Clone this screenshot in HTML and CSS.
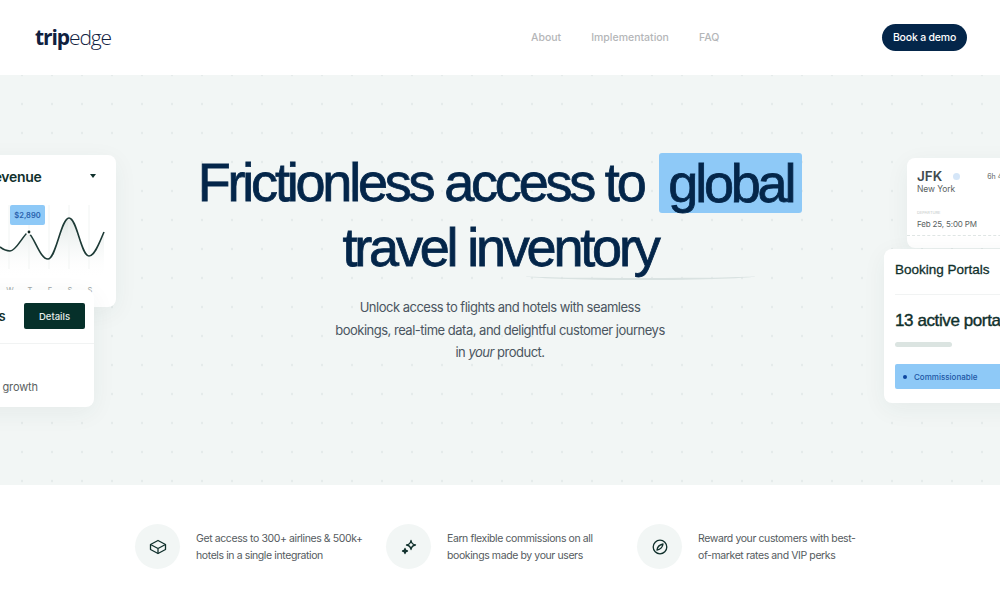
FILE: index.html
```html
<!DOCTYPE html>
<html lang="en">
<head>
    <meta charset="UTF-8">
    <title>TripEdge</title>
    <link rel="stylesheet" href="styles.css">
</head>
<body>
    <header class="topbar">
        <a class="logo"><b>trip</b><span>edge</span></a>
        <nav class="nav">
            <a>About</a>
            <a>Implementation</a>
            <a>FAQ</a>
        </nav>
        <a class="demo-btn">Book a demo</a>
    </header>

    <section class="hero">
        <!-- left cards -->
        <div class="card revenue">
            <div class="revenue-head"><span>Revenue</span><i class="caret"></i></div>
            <svg class="chart" width="116" height="90" viewBox="0 0 116 90">
                <defs>
                    <linearGradient id="fade" x1="0" y1="0" x2="0" y2="1">
                        <stop offset="0" stop-color="#dfe6e4"></stop>
                        <stop offset="1" stop-color="#ffffff" stop-opacity="0"></stop>
                    </linearGradient>
                </defs>
                <path d="M0 56C4 59 7 60 10 60C16 60 22 46 28 41C35 47 40 68 48 68C56 68 61 27 69 27C77 27 81 65 89 65C95 65 100 50 104 41V88H0Z" fill="url(#fade)"></path>
                <path d="M9 14V78M29 14V78M49 14V78M69 14V78M89 14V78" stroke="#f1f4f3" fill="none"></path>
                <path d="M0 56C4 59 7 60 10 60C16 60 22 46 28 41C35 47 40 68 48 68C56 68 61 27 69 27C77 27 81 65 89 65C95 65 100 50 104 41" stroke="#1d3a36" stroke-width="1.6" fill="none"></path>
                <circle cx="29" cy="41" r="3" fill="#fff"></circle>
                <circle cx="29" cy="41" r="1.400" fill="#10251f"></circle>
            </svg>
            <div class="tip">$2,890</div>
            <div class="days"><span>W</span><span>T</span><span>F</span><span>S</span><span>S</span></div>
        </div>
        <div class="card partners">
            <div class="partners-head"><span class="partners-title">Partners</span><a class="details">Details</a></div>
            <p class="growth">Strong growth</p>
        </div>

        <!-- right cards -->
        <div class="card flight">
            <div class="flight-top"><b>JFK</b><i class="plane"></i><small>6h 40m</small></div>
            <div class="city">New York</div>
            <div class="dep-label">DEPARTURE</div>
            <div class="dep-date">Feb 25, 5:00 PM</div>
        </div>
        <div class="card portals">
            <div class="portals-title">Booking Portals</div>
            <div class="portals-count">13 active portals</div>
            <div class="portals-bar"></div>
            <div class="portals-tag"><i></i>Commissionable</div>
        </div>

        <h1 class="headline">Frictionless access to <span class="mark">global</span><br><span class="underlined">travel inventory</span></h1>
        <p class="lead">Unlock access to flights and hotels with seamless<br>bookings, real-time data, and delightful customer journeys<br>in <em>your</em> product.</p>
    </section>

    <section class="features">
        <div class="feature">
            <div class="feature-icon">
                <svg width="18" height="18" viewBox="0 0 18 18" fill="none" stroke="#10302c" stroke-width="1.300" stroke-linejoin="round"><path d="M9 2.500 16.500 6.500V11.500L9 15.500 1.500 11.500V6.500Z"></path><path d="M1.500 6.500 9 10.500 16.500 6.500M9 10.500V15.500"></path></svg>
            </div>
            <p>Get access to 300+ airlines &amp; 500k+<br>hotels in a single integration</p>
        </div>
        <div class="feature">
            <div class="feature-icon">
                <svg width="18" height="18" viewBox="0 0 18 18" fill="none" stroke="#10302c" stroke-width="1.300" stroke-linejoin="round"><path d="M11 2.500C11.500 5.500 12.500 6.500 15.500 7C12.500 7.500 11.500 8.500 11 11.500C10.500 8.500 9.500 7.500 6.500 7C9.500 6.500 10.500 5.500 11 2.500Z"></path><path d="M5 10.500C5.200 12 6 12.800 7.500 13C6 13.200 5.200 14 5 15.500C4.800 14 4 13.200 2.500 13C4 12.800 4.800 12 5 10.500Z" fill="#10302c"></path></svg>
            </div>
            <p>Earn flexible commissions on all<br>bookings made by your users</p>
        </div>
        <div class="feature">
            <div class="feature-icon">
                <svg width="18" height="18" viewBox="0 0 18 18" fill="none" stroke="#10302c" stroke-width="1.300" stroke-linejoin="round"><circle cx="9" cy="9" r="6.800"></circle><path d="M12 6C11.700 8.800 10.500 11 6 12C6.300 9 7.500 7 12 6Z"></path></svg>
            </div>
            <p>Reward your customers with best-<br>of-market rates and VIP perks</p>
        </div>
    </section>
</body>
</html>
```

FILE: styles.css
```css
* { box-sizing: border-box; }
body { margin: 0; height: 600px; overflow: hidden; background: #fff; font-family: Inter, "Liberation Sans", sans-serif; color: #0a2540; }
p { margin: 0; }

.topbar { height: 75px; display: flex; align-items: center; padding: 0 33px 0 35px; }
.logo { width: 496px; font-size: 21px; letter-spacing: -1.100px; color: #10213f; font-family: "Open Sans", sans-serif; margin-top: -2px; }
.logo b { font-weight: 700; }
.logo span { font-weight: 300; }
.nav { display: flex; gap: 30px; flex: 1; font-size: 10.500px; font-weight: 500; color: #b4b6b8; }
.demo-btn { background: #04264a; color: #fff; border-radius: 14px; height: 27px; width: 85px; display: flex; align-items: center; justify-content: center; font-size: 10.500px; font-weight: 500; letter-spacing: -0.200px; }

.hero { position: relative; height: 410px; overflow: hidden; background-color: #f2f6f5; background-image: radial-gradient(circle, #dde4e3 0.8px, transparent 1.200px); background-size: 30px 29px; background-position: 7px 14.500px; text-align: center; padding-top: 75px; }
.headline { margin: 0; font-family: "Liberation Sans", sans-serif; font-size: 54px; font-weight: 400; line-height: 65px; letter-spacing: -3.200px; color: #04264a; -webkit-text-stroke: 0.800px #04264a; }
.mark { display: inline-block; background: #8ec9f7; border-radius: 3px; height: 60px; line-height: 60px; padding: 0 9px; margin-left: 4px; vertical-align: -1px; }
.underlined { position: relative; }
.underlined::after { content: ""; position: absolute; left: 183px; bottom: -3px; width: 229px; height: 6px; border-bottom: 2px solid #d9e2e1; border-radius: 0 0 50% 50%; }
.lead { margin-top: 16px; font-size: 13px; letter-spacing: -0.500px; line-height: 22.500px; color: #4a5560; }

.card { position: absolute; background: #fff; border-radius: 8px; box-shadow: 0 6px 24px rgba(30, 60, 60, 0.06); text-align: left; }
.revenue { left: -40px; top: 80px; width: 156px; height: 152px; }
.revenue-head { display: flex; justify-content: space-between; align-items: center; padding: 13px 20px 0 25px; font-size: 14px; font-weight: 600; letter-spacing: -0.300px; color: #10302c; }
.caret { border: 3px solid transparent; border-top: 4px solid #10302c; margin-top: 2px; }
.chart { position: absolute; left: 40px; top: 36px; }
.tip { position: absolute; left: 50px; top: 50px; width: 35px; height: 20px; border-radius: 2px; background: #8ec9f7; color: #2a62ad; font-size: 7.500px; font-weight: 600; display: flex; align-items: center; justify-content: center; }
.days { position: absolute; left: 40px; top: 131px; width: 100px; display: flex; font-size: 7.500px; color: #a0a7a6; }
.days span { width: 20px; text-align: center; }

.partners { left: -60px; top: 215px; width: 154px; height: 117px; }
.partners-head { display: flex; justify-content: space-between; align-items: center; padding: 13px 9px 14px 12px; border-bottom: 1px solid #f1f3f3; }
.partners-title { font-size: 13px; font-weight: 600; color: #10302c; }
.details { width: 61px; height: 26px; background: #06302a; border-radius: 2px; color: #e6efec; font-size: 9.500px; font-weight: 500; display: flex; align-items: center; justify-content: center; }
.growth { position: absolute; right: 56px; top: 90px; font-size: 11px; letter-spacing: -0.100px; color: #5a6262; white-space: nowrap; }

.flight { left: 907px; top: 83px; width: 140px; height: 90px; padding: 10px; }
.flight::after { content: ""; position: absolute; left: 0; right: 0; top: 77px; border-top: 1px dashed #dfe5e4; }
.flight-top { display: flex; align-items: center; font-size: 13.500px; color: #3f4a4f; }
.flight-top b { font-weight: 600; }
.plane { width: 7px; height: 7px; border-radius: 50%; background: #d5e6f8; margin-left: 11px; }
.flight-top small { font-size: 7px; margin-left: 27px; color: #5a6262; }
.city { font-size: 8.500px; letter-spacing: -0.100px; color: #5a6262; }
.dep-label { font-size: 4px; color: #c3c8c8; margin-top: 16px; }
.dep-date { font-size: 8px; letter-spacing: -0.150px; color: #5a6262; margin-top: 4px; }
.portals { left: 884px; top: 174px; width: 160px; height: 154px; padding: 13px 11px; }
.portals-title { font-size: 13.500px; color: #10302c; padding-bottom: 17px; border-bottom: 1px solid #f1f3f3; white-space: nowrap; font-family: "Liberation Sans", sans-serif; -webkit-text-stroke: 0.300px #10302c; }
.portals-count { font-size: 17px; color: #10302c; margin-top: 16px; white-space: nowrap; font-family: "Liberation Sans", sans-serif; -webkit-text-stroke: 0.400px #10302c; letter-spacing: -0.400px; }
.portals-bar { width: 57px; height: 5px; border-radius: 3px; background: #dbe4e1; margin-top: 11px; }
.portals-tag { width: 150px; height: 25px; margin-top: 17px; border-radius: 2px; background: #8ec9f7; color: #1c57a5; font-size: 8px; font-weight: 500; display: flex; align-items: center; gap: 7px; padding-left: 8px; }
.portals-tag i { width: 4px; height: 4px; border-radius: 50%; background: #0d46a0; }

.features { display: flex; padding: 39px 0 0 135px; }
.feature { display: flex; align-items: center; width: 251px; gap: 16px; }
.feature-icon { width: 45px; height: 45px; flex: none; border-radius: 50%; background: #f2f6f5; display: flex; align-items: center; justify-content: center; }
.feature p { font-size: 10.500px; letter-spacing: -0.400px; line-height: 17px; color: #555b60; white-space: nowrap; }
```
